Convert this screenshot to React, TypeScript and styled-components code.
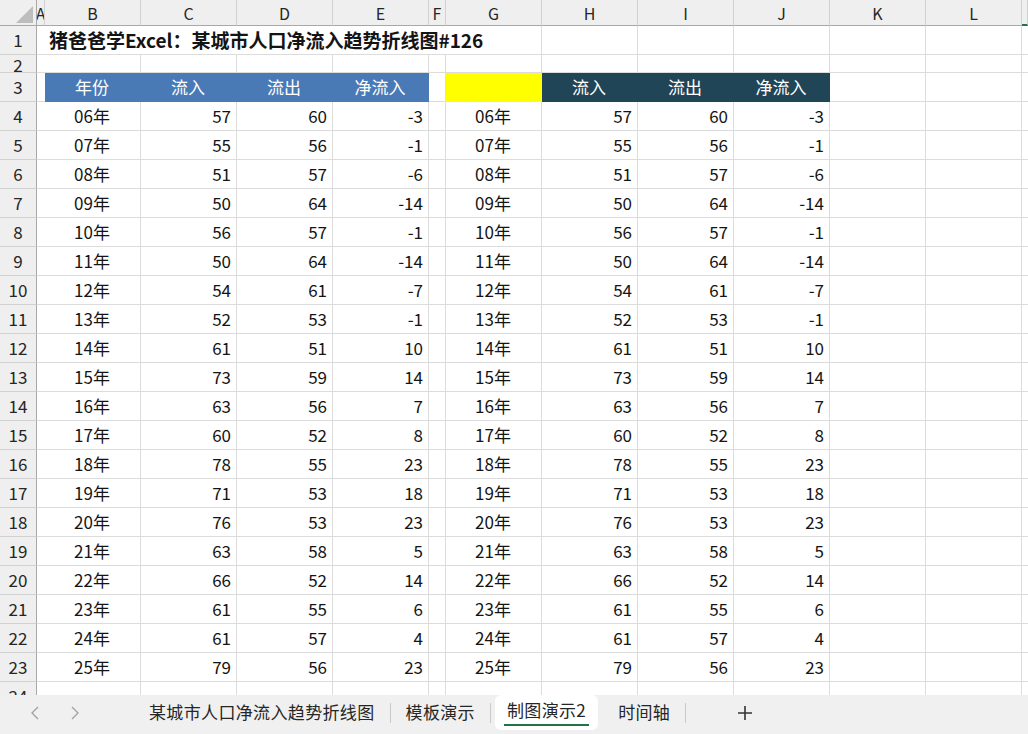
import React from "react";
import styled, { createGlobalStyle } from "styled-components";

const GlobalStyle = createGlobalStyle`
  html, body {
    margin: 0;
    padding: 0;
    background: #ffffff;
  }
  body {
    font-family: "Noto Sans CJK SC", "Noto Sans", "Liberation Sans", sans-serif;
    color: #1a1a1a;
  }
`;

const GRID_LINE = "#dcdcdc";
const HEAD_BG = "#efefef";
const BLUE = "#4a7ab5";
const TEAL = "#1f4557";
const YELLOW = "#ffff00";

const COLUMNS = ["A", "B", "C", "D", "E", "F", "G", "H", "I", "J", "K", "L"];

const DATA: [string, number, number, number][] = [
  ["06年", 57, 60, -3],
  ["07年", 55, 56, -1],
  ["08年", 51, 57, -6],
  ["09年", 50, 64, -14],
  ["10年", 56, 57, -1],
  ["11年", 50, 64, -14],
  ["12年", 54, 61, -7],
  ["13年", 52, 53, -1],
  ["14年", 61, 51, 10],
  ["15年", 73, 59, 14],
  ["16年", 63, 56, 7],
  ["17年", 60, 52, 8],
  ["18年", 78, 55, 23],
  ["19年", 71, 53, 18],
  ["20年", 76, 53, 23],
  ["21年", 63, 58, 5],
  ["22年", 66, 52, 14],
  ["23年", 61, 55, 6],
  ["24年", 61, 57, 4],
  ["25年", 79, 56, 23],
];

const Sheet = styled.div`
  width: 1028px;
  height: 734px;
  display: flex;
  flex-direction: column;
  overflow: hidden;
`;

const Viewport = styled.div`
  flex: none;
  height: 695px;
  overflow: hidden;
`;

const Grid = styled.div`
  display: grid;
  grid-template-columns: 37px 8px repeat(4, 96px) 17px repeat(6, 96px) 6px;
  grid-template-rows: 26px 29px 18px 29px repeat(21, 29px);
`;

const Corner = styled.div`
  box-sizing: border-box;
  background: ${HEAD_BG};
  border-right: 1px solid #a8a8a8;
  border-bottom: 1px solid #a8a8a8;
  display: flex;
  align-items: flex-end;
  justify-content: flex-end;
  padding: 0 3px 2px 0;
`;

const ColHead = styled.div<{ $selected?: boolean }>`
  box-sizing: border-box;
  background: ${HEAD_BG};
  border-right: 1px solid #d2d2d2;
  border-bottom: ${(p) => (p.$selected ? "2px solid #217346" : "1px solid #a8a8a8")};
  display: flex;
  align-items: center;
  justify-content: center;
  font-size: 16px;
  line-height: 20px;
  color: #262626;
  overflow: hidden;
  white-space: nowrap;
`;

const RowHead = styled.div<{ $compact?: boolean }>`
  box-sizing: border-box;
  background: ${HEAD_BG};
  border-right: 1px solid #a8a8a8;
  border-bottom: 1px solid #d2d2d2;
  display: flex;
  align-items: flex-end;
  justify-content: center;
  padding-bottom: ${(p) => (p.$compact ? "0" : "4px")};
  font-size: 17px;
  line-height: ${(p) => (p.$compact ? "15px" : "20px")};
  color: #262626;
  overflow: hidden;
`;

const Cell = styled.div<{
  $align?: "left" | "center" | "right";
  $bg?: string;
  $fg?: string;
  $span?: number;
  $bold?: boolean;
}>`
  box-sizing: border-box;
  grid-column: span ${(p) => p.$span ?? 1};
  background: ${(p) => p.$bg ?? "#ffffff"};
  border-right: 1px solid ${(p) => p.$bg ?? GRID_LINE};
  border-bottom: 1px solid ${(p) => p.$bg ?? GRID_LINE};
  color: ${(p) => p.$fg ?? "#141414"};
  display: flex;
  align-items: center;
  justify-content: ${(p) =>
    p.$align === "center" ? "center" : p.$align === "right" ? "flex-end" : "flex-start"};
  padding: 0 5px 0 4px;
  font-size: ${(p) => (p.$bold ? "19px" : "17px")};
  font-weight: ${(p) => (p.$bold ? 700 : 400)};
  line-height: 20px;
  white-space: nowrap;
  overflow: hidden;
`;

const TabBar = styled.div`
  flex: none;
  height: 39px;
  background: #f0f0f0;
  display: flex;
  align-items: stretch;
`;

const Nav = styled.div`
  width: 134px;
  display: flex;
  align-items: center;
  padding-left: 15px;
  box-sizing: border-box;
`;

const NavButton = styled.div`
  width: 40px;
  height: 30px;
  display: flex;
  align-items: center;
  justify-content: center;
  padding-bottom: 4px;
  box-sizing: border-box;
`;

const Tab = styled.div<{ $active?: boolean }>`
  position: relative;
  display: flex;
  align-items: center;
  padding: ${(p) => (p.$active ? "0 12px 6px" : "0 15px 6px")};
  margin: ${(p) => (p.$active ? "0 4px 4px" : "0")};
  background: ${(p) => (p.$active ? "#ffffff" : "transparent")};
  border-radius: ${(p) => (p.$active ? "6px" : "0")};
  font-size: 17px;
  line-height: 20px;
  letter-spacing: 0.35px;
  color: #262626;
  white-space: nowrap;
`;

const Underline = styled.div`
  position: absolute;
  left: 9px;
  right: 9px;
  bottom: 4px;
  height: 2px;
  background: #217346;
`;

const Separator = styled.div<{ $hidden?: boolean }>`
  width: 1px;
  height: 20px;
  align-self: center;
  margin-bottom: 4px;
  background: ${(p) => (p.$hidden ? "transparent" : "#c8c8c8")};
`;

const AddButton = styled.div`
  width: 40px;
  margin-left: 39px;
  display: flex;
  align-items: center;
  justify-content: center;
  padding-bottom: 4px;
`;

const Chevron = ({ dir }: { dir: "left" | "right" }) => (
  <svg width="8" height="14" viewBox="0 0 8 14">
    <path
      d={dir === "left" ? "M7 1 L1 7 L7 13" : "M1 1 L7 7 L1 13"}
      fill="none"
      stroke="#a0a0a0"
      strokeWidth="1.3"
    />
  </svg>
);

const Plus = () => (
  <svg width="16" height="16" viewBox="0 0 16 16">
    <path d="M8 1 V15 M1 8 H15" stroke="#333" strokeWidth="1.6" fill="none" />
  </svg>
);

const emptyTail = (row: number, from: number) =>
  Array.from({ length: 14 - from }, (_, i) => <Cell key={`e${row}-${from + i}`} />);

const App = () => {
  const rows: React.ReactNode[] = [];

  // column header row
  rows.push(
    <Corner key="corner">
      <svg width="17" height="17" viewBox="0 0 17 17">
        <polygon points="17,0 17,17 0,17" fill="#bdbdbd" />
      </svg>
    </Corner>
  );
  COLUMNS.forEach((c) => rows.push(<ColHead key={`h${c}`}>{c}</ColHead>));
  rows.push(<ColHead key="hstub" $selected />);

  // row 1: title
  rows.push(<RowHead key="r1">1</RowHead>);
  rows.push(<Cell key="r1a" />);
  rows.push(
    <Cell key="r1title" $span={6} $bold>
      猪爸爸学Excel：某城市人口净流入趋势折线图#126
    </Cell>
  );
  rows.push(...emptyTail(1, 8));

  // row 2 (short row)
  rows.push(
    <RowHead key="r2" $compact>
      2
    </RowHead>
  );
  rows.push(...emptyTail(2, 1));

  // row 3: headers
  rows.push(<RowHead key="r3">3</RowHead>);
  rows.push(<Cell key="r3a" />);
  ["年份", "流入", "流出", "净流入"].forEach((t) =>
    rows.push(
      <Cell key={`r3l${t}`} $bg={BLUE} $fg="#ffffff" $align="center">
        {t}
      </Cell>
    )
  );
  rows.push(<Cell key="r3f" />);
  rows.push(<Cell key="r3g" $bg={YELLOW} />);
  ["流入", "流出", "净流入"].forEach((t) =>
    rows.push(
      <Cell key={`r3r${t}`} $bg={TEAL} $fg="#ffffff" $align="center">
        {t}
      </Cell>
    )
  );
  rows.push(<Cell key="r3k" />, <Cell key="r3l" />, <Cell key="r3s" />);

  // data rows 4..23
  DATA.forEach(([year, inflow, outflow, net], i) => {
    const r = i + 4;
    rows.push(<RowHead key={`r${r}`}>{r}</RowHead>);
    rows.push(<Cell key={`r${r}a`} />);
    rows.push(
      <Cell key={`r${r}b`} $align="center">
        {year}
      </Cell>,
      <Cell key={`r${r}c`} $align="right">
        {inflow}
      </Cell>,
      <Cell key={`r${r}d`} $align="right">
        {outflow}
      </Cell>,
      <Cell key={`r${r}e`} $align="right">
        {net}
      </Cell>,
      <Cell key={`r${r}f`} />,
      <Cell key={`r${r}g`} $align="center">
        {year}
      </Cell>,
      <Cell key={`r${r}h`} $align="right">
        {inflow}
      </Cell>,
      <Cell key={`r${r}i`} $align="right">
        {outflow}
      </Cell>,
      <Cell key={`r${r}j`} $align="right">
        {net}
      </Cell>
    );
    rows.push(<Cell key={`r${r}k`} />, <Cell key={`r${r}l`} />, <Cell key={`r${r}s`} />);
  });

  // row 24 (cut off by the tab bar)
  rows.push(<RowHead key="r24">24</RowHead>);
  rows.push(...emptyTail(24, 1));

  return (
    <>
      <GlobalStyle />
      <Sheet>
        <Viewport>
          <Grid>{rows}</Grid>
        </Viewport>
        <TabBar>
          <Nav>
            <NavButton>
              <Chevron dir="left" />
            </NavButton>
            <NavButton>
              <Chevron dir="right" />
            </NavButton>
          </Nav>
          <Tab>某城市人口净流入趋势折线图</Tab>
          <Separator />
          <Tab>模板演示</Tab>
          <Separator />
          <Tab $active>
            制图演示2
            <Underline />
          </Tab>
          <Separator $hidden />
          <Tab>时间轴</Tab>
          <Separator />
          <AddButton>
            <Plus />
          </AddButton>
        </TabBar>
      </Sheet>
    </>
  );
};

export default App;
